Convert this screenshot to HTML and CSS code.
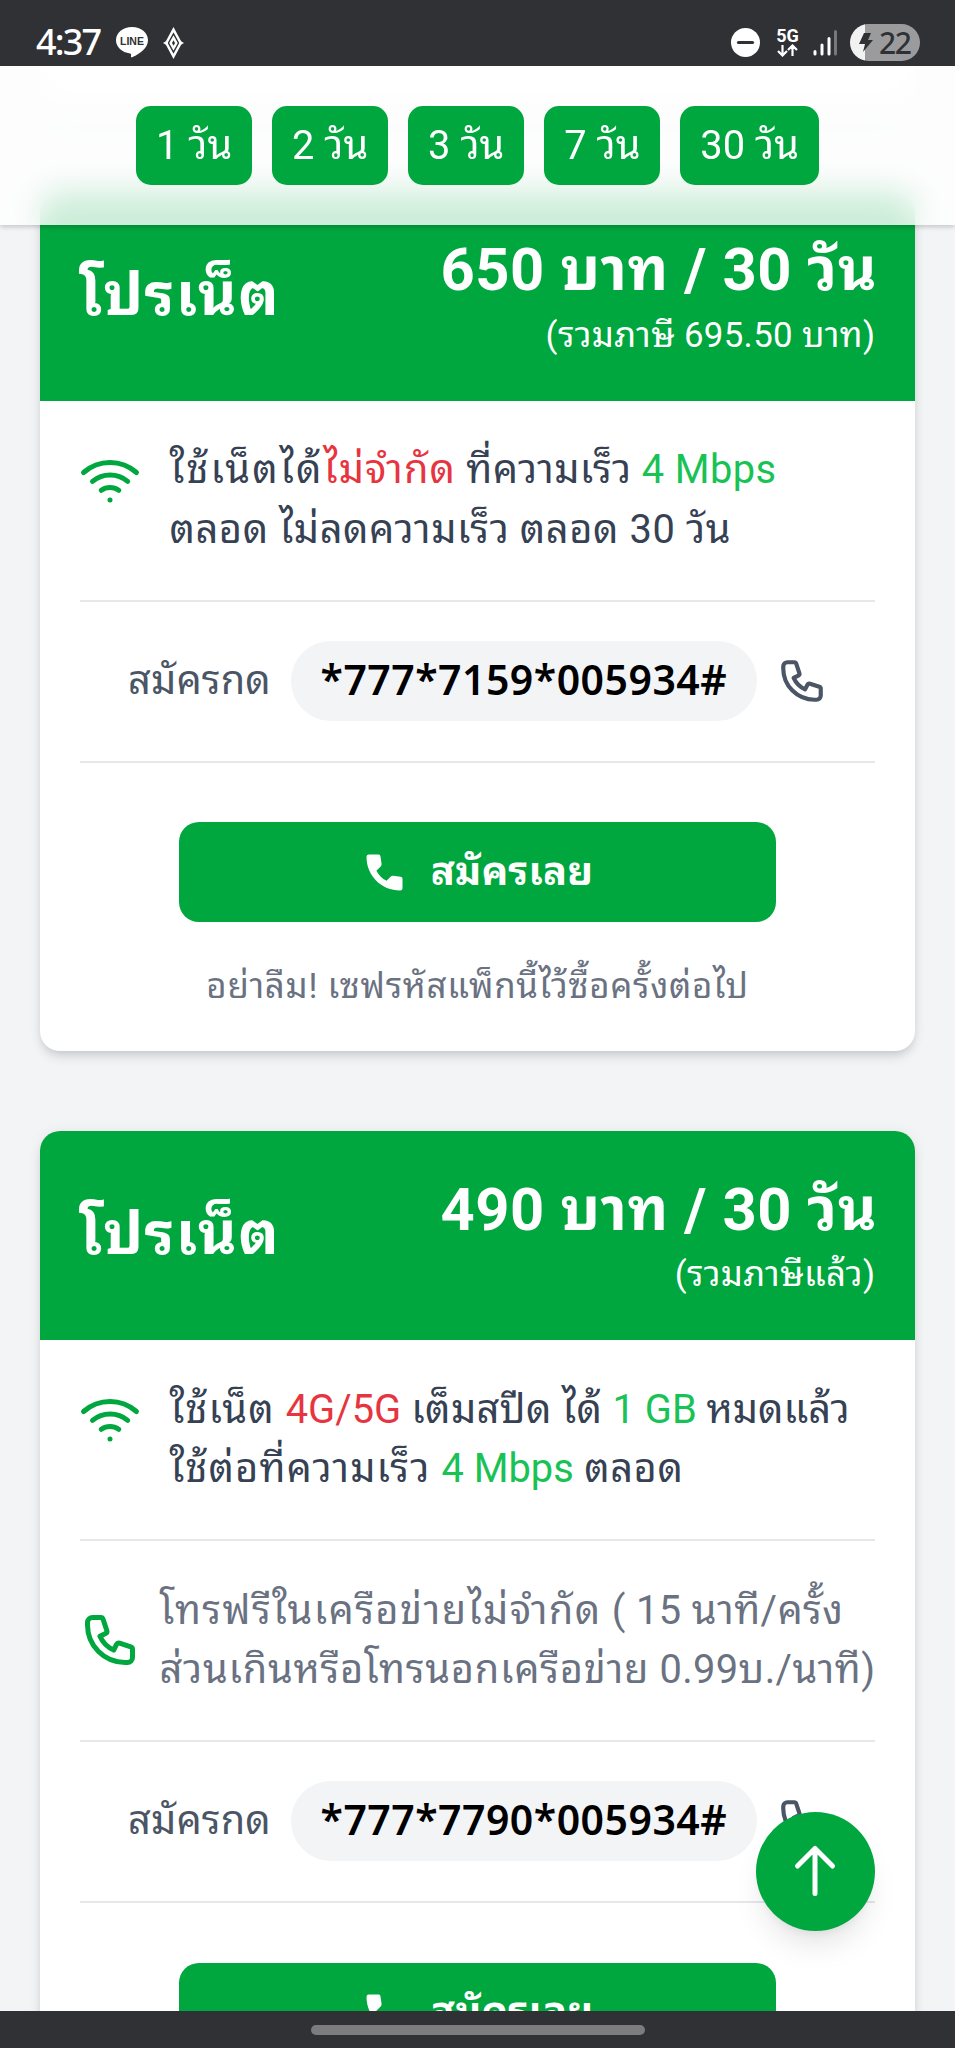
FILE: index.html
```html
<!DOCTYPE html>
<html lang="th">
<head>
<meta charset="utf-8">
<title>โปรเน็ต</title>
<link rel="stylesheet" href="styles.css">
</head>
<body>
<svg class="defs" aria-hidden="true">
  <symbol id="wifi" viewBox="0 0 24 24"><path d="M5 12.55a11 11 0 0 1 14.08 0M1.42 9a16 16 0 0 1 21.16 0M8.53 16.11a6 6 0 0 1 6.95 0M12 20h.01"/></symbol>
  <symbol id="phone" viewBox="0 0 24 24"><path d="M3 5a2 2 0 012-2h3.28a1 1 0 01.948.684l1.498 4.493a1 1 0 01-.502 1.21l-2.257 1.13a11.042 11.042 0 005.516 5.516l1.13-2.257a1 1 0 011.21-.502l4.493 1.498a1 1 0 01.684.949V19a2 2 0 01-2 2h-1C9.716 21 3 14.284 3 6V5z"/></symbol>
  <symbol id="call" viewBox="0 0 20 20"><path d="M2 3a1 1 0 011-1h4.300c.5 0 .8.300.9.800l.500 3.400c.05.400-.1.800-.400 1.100L6.400 9.200c1.200 2.100 2.500 3.400 4.500 4.500l1.900-1.900c.300-.300.700-.450 1.100-.400l3.300.500c.5.100.8.400.8.900V17a1 1 0 01-1 1C8.600 18 2 11.400 2 3z"/></symbol>
</svg>
<div class="screen">
  <header class="status">
    <div class="status-left">
      <span class="clock">4:37</span>
      <svg class="line-icon" viewBox="0 0 32 31"><path fill="#fff" d="M16 0C7 0 0 5.800 0 13.200c0 6.700 5.900 12.200 14 13.200 1.200.3 1.300 1 1 2.300-.2 1.400.1 2.100 1.600 1.400C24 26.500 32 21 32 13.200 32 5.800 25 0 16 0z"/><text x="16" y="17.500" text-anchor="middle" class="line-text">LINE</text></svg>
      <svg class="gem" viewBox="0 0 22 34"><path d="M11 3L3.500 17 11 31 18.500 17zM11 11.500L8 17l3 5.500L14 17z" fill="none" stroke="#fff" stroke-width="2.600"/><path d="M0 17l5-3v6zM22 17l-5-3v6z" fill="#fff"/></svg>
    </div>
    <div class="status-right">
      <svg class="dnd" viewBox="0 0 29 29"><circle cx="14.500" cy="14.500" r="14.500" fill="#fff"/><path d="M7.500 14.500h14" stroke="#303135" stroke-width="3.200" stroke-linecap="round"/></svg>
      <div class="net"><span class="net-label">5G</span><svg class="net-arrows" viewBox="0 0 21 13"><path d="M5.500 1v10M1 7l4.500 4.500L10 7M15.500 12V2M11 6l4.500-4.500L20 6" fill="none" stroke="#fff" stroke-width="2.200"/></svg></div>
      <svg class="signal" viewBox="0 0 25 26"><g stroke-width="3" stroke-linecap="round" stroke="#fff"><path d="M2 21.500v2.500M9 15v9M16 8.500V24"/><path d="M22.500 1.500V24" stroke="#77787b"/></g></svg>
      <div class="battery"><svg class="bolt" viewBox="0 0 14 19"><path d="M5 0h7L9 7h5L4 19l2-8H0z" fill="#303135"/></svg><span>22</span></div>
    </div>
  </header>
  <main class="page">
    <nav class="days"><a class="day">1 วัน</a><a class="day">2 วัน</a><a class="day">3 วัน</a><a class="day">7 วัน</a><a class="day">30 วัน</a></nav>
    <section class="card card-end"></section>
    <section class="card">
      <div class="head"><h2 class="title">โปรเน็ต</h2><div class="price"><p class="amount">650 บาท / 30 วัน</p><p class="tax">(รวมภาษี 695.50 บาท)</p></div></div>
      <div class="body">
        <div class="row feature"><svg class="icon wifi"><use href="#wifi"/></svg><p class="desc"><span class="sp-xl">ใช้เน็ตได้</span><span class="red sp-l">ไม่จำกัด</span><span class="sp-s"> ที่ความเร็ว <span class="green">4 Mbps</span></span><br><span class="sp-m">ตลอด ไม่ลดความเร็ว ตลอด 30 วัน</span></p></div>
        <div class="row code-row"><span class="label">สมัครกด</span><span class="code">*777*7159*005934#</span><svg class="icon dial"><use href="#phone"/></svg></div>
        <a class="apply"><svg class="call"><use href="#call"/></svg><span class="apply-text">สมัครเลย</span></a>
        <p class="note">อย่าลืม! เซฟรหัสแพ็กนี้ไว้ซื้อครั้งต่อไป</p>
      </div>
    </section>
    <section class="card">
      <div class="head"><h2 class="title">โปรเน็ต</h2><div class="price"><p class="amount">490 บาท / 30 วัน</p><p class="tax">(รวมภาษีแล้ว)</p></div></div>
      <div class="body">
        <div class="row feature"><svg class="icon wifi"><use href="#wifi"/></svg><p class="desc"><span class="sp-l">ใช้เน็ต </span><span class="red">4G/5G</span><span class="sp-s"> เต็มสปีด ได้ </span><span class="green">1 GB</span> หมดแล้ว<br><span class="sp-l">ใช้ต่อที่ความเร็ว </span><span class="green">4 Mbps</span><span class="sp-m"> ตลอด</span></p></div>
        <div class="row talk"><svg class="icon"><use href="#phone"/></svg><p class="desc muted"><span class="sp-l2">โทรฟรีในเครือข่ายไม่จำกัด</span><span class="sp-s"> ( 15 นาที/ครั้ง</span><br><span class="sp-ml">ส่วนเกินหรือโทรนอกเครือข่าย</span><span class="sp-s"> 0.99บ./นาที)</span></p></div>
        <div class="row code-row"><span class="label">สมัครกด</span><span class="code">*777*7790*005934#</span><svg class="icon dial"><use href="#phone"/></svg></div>
        <a class="apply"><svg class="call"><use href="#call"/></svg><span class="apply-text">สมัครเลย</span></a>
      </div>
    </section>
    <a class="to-top"><svg viewBox="0 0 24 24"><path d="M5 10l7-7 7 7M12 3v18"/></svg></a>
  </main>
  <footer class="gesture"><span class="handle"></span></footer>
</div>
</body>
</html>
```
FILE: styles.css
```css
* { box-sizing: border-box; }
html { font-size: 39.8px; }
body { margin: 0; font-family: Roboto, "Noto Sans Thai Looped", "Noto Sans Thai", "Noto Sans", sans-serif; line-height: 1.5; }
p, h2 { margin: 0; }
.defs { position: absolute; width: 0; height: 0; }
.screen { width: 955px; height: 2048px; display: flex; flex-direction: column; overflow: hidden; background: #303135; }

.status { flex: none; height: 66px; display: flex; justify-content: space-between; padding: 0 35px 0 36px; color: #fff; }
.status-left, .status-right { display: flex; align-items: center; padding-top: 19px; }
.clock { font: 500 36px/1 "Noto Sans", sans-serif; letter-spacing: -1.800px; width: 80px; padding-bottom: 2px; }
.line-icon { width: 32px; height: 31px; }
.line-text { font: 700 10.500px "Liberation Sans", sans-serif; fill: #303135; }
.gem { width: 21px; height: 34px; margin-left: 15px; }
.dnd { width: 29px; height: 29px; }
.net { display: flex; flex-direction: column; align-items: center; margin-left: 16px; width: 23px; }
.net-label { font: 700 18px/16px Roboto, sans-serif; }
.net-arrows { width: 21px; height: 13px; }
.signal { width: 25px; height: 26px; margin-left: 14px; }
.battery { display: flex; align-items: center; gap: 6px; width: 70px; height: 37px; margin-left: 12px; padding-left: 9px; border-radius: 19px; background: linear-gradient(90deg, #f2f2f3 15px, #9b9b9e 15px); color: #303135; font: 500 30px/37px "Noto Sans", sans-serif; letter-spacing: -1.500px; }
.bolt { width: 14px; height: 19px; }

.page { position: relative; flex: 1; min-height: 0; overflow: hidden; display: flex; flex-direction: column; gap: 2rem; padding: 0 1rem; background: #f3f4f6; }
.days { position: absolute; z-index: 2; top: 0; left: 0; right: 0; display: flex; justify-content: center; gap: .5rem; padding: 1rem 0; background: rgba(255,255,255,.8); backdrop-filter: blur(16px); box-shadow: 0 2px 6px rgba(0,0,0,.1), 0 2px 4px rgba(0,0,0,.1); }
.day { height: 2rem; padding: .25rem .5rem; border-radius: 15px; background: #00a63e; color: #fff; letter-spacing: .05px; white-space: nowrap; }

.card { flex: none; border-radius: 20px; overflow: hidden; background: #fff; box-shadow: 0 8px 12px -2px rgba(0,0,0,.1), 0 4px 8px -4px rgba(0,0,0,.1), 0 0 14px rgba(0,0,0,.06); }
.card-end { height: 46px; border-radius: 0 0 20px 20px; }
.head { display: flex; justify-content: space-between; align-items: center; padding: 1rem; background: #00a63e; color: #fff; }
.title, .amount { font-size: 1.5rem; line-height: 2rem; font-weight: 700; white-space: nowrap; }
.title { letter-spacing: 1.400px; }
.amount { letter-spacing: .55px; margin-right: -2px; }
.price { text-align: right; }
.tax { font-size: .875rem; line-height: 1.25rem; letter-spacing: .35px; white-space: nowrap; }
.body { display: flex; flex-direction: column; padding: 1rem; }
.row { display: flex; padding-bottom: 1rem; margin-bottom: 1rem; border-bottom: 2px solid #e5e7eb; }
.feature { gap: .75rem; }
.talk { align-items: center; gap: .5rem; }
.desc { color: #364153; white-space: nowrap; }
.muted { color: #6a7282; }
.red { color: #e7353f; }
.green { color: #18c255; }
.sp-s { letter-spacing: .38px; }
.sp-m { letter-spacing: .58px; }
.sp-ml { letter-spacing: .75px; }
.sp-l { letter-spacing: 1.100px; }
.sp-l2 { letter-spacing: 1.400px; }
.sp-xl { letter-spacing: 2.100px; }
.icon { flex: none; width: 60px; height: 60px; fill: none; stroke: #00a63e; stroke-width: 2; stroke-linecap: round; stroke-linejoin: round; }
.wifi { margin-top: .25rem; }
.code-row { justify-content: center; align-items: center; gap: .5rem; }
.label { color: #4a5565; letter-spacing: .1px; white-space: nowrap; }
.code { height: 2rem; padding: .25rem .75rem; border-radius: 1rem; background: #f3f4f6; color: #000; font-family: "Noto Sans", sans-serif; font-size: 41px; line-height: 57px; font-weight: 600; letter-spacing: .48px; white-space: nowrap; }
.dial { width: 50px; height: 50px; stroke: #4a5565; }
.apply { width: 75%; height: 2.5rem; margin: .5rem auto 0; display: flex; align-items: center; justify-content: center; gap: .6rem; border-radius: 20px; background: #00a63e; color: #fff; font-weight: 700; letter-spacing: .2px; }
.call { width: 45px; height: 45px; fill: #fff; }
.note { margin-top: 1rem; text-align: center; font-size: .875rem; line-height: 1.25rem; letter-spacing: .72px; color: #6a7282; white-space: nowrap; }
.to-top { position: absolute; z-index: 3; right: 80px; bottom: 80px; width: 3rem; height: 3rem; display: flex; align-items: center; justify-content: center; border-radius: 50%; background: #00a63e; box-shadow: 0 20px 30px -6px rgba(0,0,0,.1), 0 8px 12px -8px rgba(0,0,0,.1); }
.to-top svg { width: 60px; height: 60px; fill: none; stroke: #fff; stroke-width: 2; stroke-linecap: round; stroke-linejoin: round; }
.gesture { flex: none; height: 37px; display: flex; align-items: center; justify-content: center; }
.handle { width: 334px; height: 10px; border-radius: 5px; background: #7c7c7e; }
```
